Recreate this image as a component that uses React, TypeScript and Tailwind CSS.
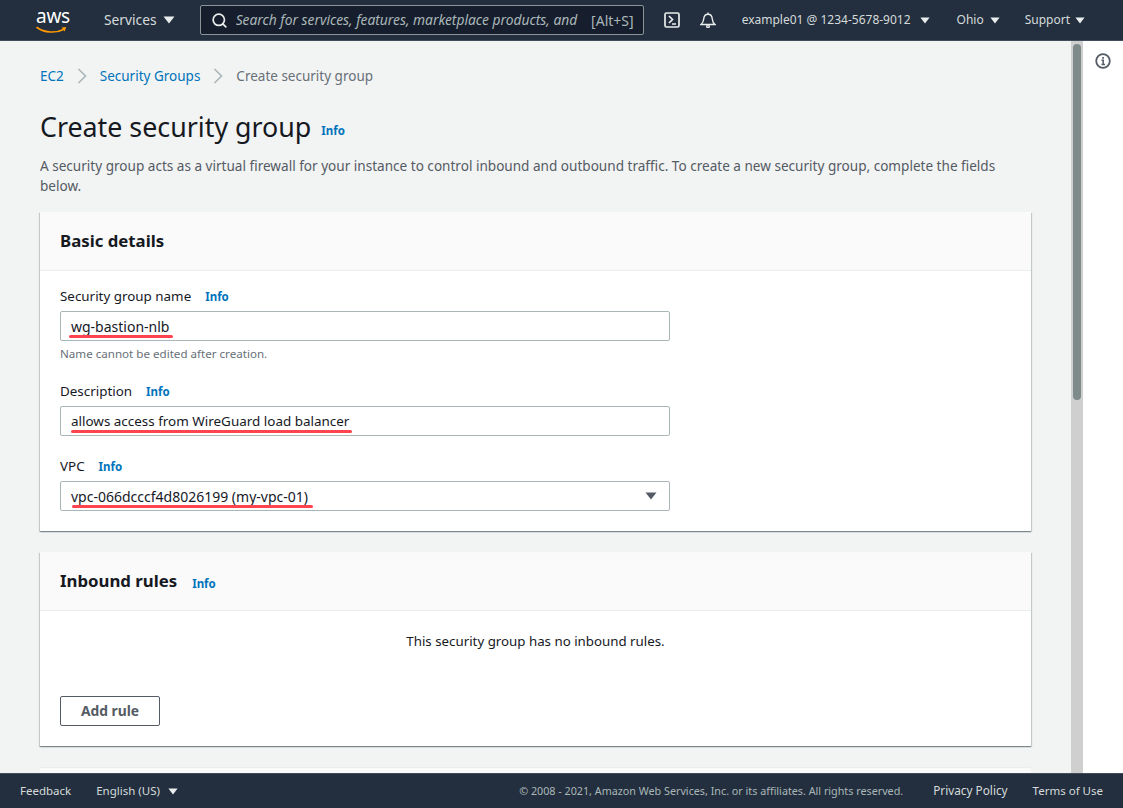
import { Search } from "lucide-react";

const font = "font-['Noto_Sans',sans-serif]";
const cardShadow = "shadow-[0_1px_1px_0_rgba(0,28,36,0.3),1px_1px_1px_0_rgba(0,28,36,0.15),-1px_1px_1px_0_rgba(0,28,36,0.15)]";

function Caret({ className = "" }: { className?: string }) {
  return (
    <svg viewBox="0 0 12 8" className={className} fill="currentColor">
      <path d="M0.5 0.5h11L6 7.5z" />
    </svg>
  );
}

function Chevron() {
  return (
    <svg viewBox="0 0 10 16" className="h-4 w-[10px] text-[#aab7b8]" fill="none" stroke="currentColor" strokeWidth="1.6">
      <path d="M1.5 1l7 7-7 7" />
    </svg>
  );
}

function AwsLogo() {
  return (
    <div className="relative flex h-[30px] w-[34px] flex-col items-center">
      <span className="text-[19px] leading-[20px] tracking-[-0.3px] text-white">aws</span>
      <svg viewBox="0 0 32 9" className="absolute top-[20px] left-0 h-[9px] w-[32px]" fill="none">
        <path d="M1 1.5C8 6.8 20 7.5 28 3.2" stroke="#ff9900" strokeWidth="1.6" strokeLinecap="round" />
        <path d="M25.6 1.6l4.6-.5-1.4 4.4z" fill="#ff9900" />
      </svg>
    </div>
  );
}

function Info({ className = "" }: { className?: string }) {
  return <a className={"text-[11.5px] font-bold text-[#0073bb] " + className}>Info</a>;
}

function Underline({ className }: { className: string }) {
  return <div className={"absolute h-[3px] rounded-full bg-[#ff4450] " + className} />;
}

function Header() {
  return (
    <header className="flex h-[41px] shrink-0 items-center border-b border-[#414d5c] bg-[#232f3e] text-[#d5dbdb]">
      <div className="ml-[36px] pt-[1px]">
        <AwsLogo />
      </div>
      <span className="ml-[34px] text-[13.8px]">Services</span>
      <Caret className="ml-[6px] h-[8px] w-[12px] text-[#eaeded]" />
      <div className="ml-[25px] flex h-[30px] w-[444px] items-center rounded-[2px] border border-[#879596] bg-[#161e2d] pr-[9px] pl-[10px]">
        <Search size={17} strokeWidth={2.4} className="shrink-0 text-[#eaeded]" />
        <span className="ml-[8px] min-w-0 flex-1 truncate text-[13.8px] text-[#aab7b8] italic">
          Search for services, features, marketplace products, and
        </span>
        <span className="ml-[9px] shrink-0 text-[14px] text-[#aab7b8]">[Alt+S]</span>
      </div>
      <svg viewBox="0 0 16 16" className="ml-[20px] h-[16px] w-[16px] text-[#eaeded]" fill="none" stroke="currentColor" strokeWidth="1.7">
        <rect x="1" y="1" width="14" height="14" rx="1.5" />
        <path d="M5 4l3.5 3.5L5 11M8 12h4" />
      </svg>
      <svg viewBox="0 0 16 16" className="ml-[20px] h-[16px] w-[16px] text-[#eaeded]" fill="none" stroke="currentColor" strokeWidth="1.4">
        <path d="M1 12.5h14c-2-1.5-2.5-3-2.7-5.5C12 4 10.5 2.2 8 2.2S4 4 3.7 7C3.5 9.5 3 11 1 12.5zM8 .5v1.7" />
        <circle cx="8" cy="14.2" r="1.3" />
      </svg>
      <span className="ml-[26px] text-[12px]">example01 @ 1234-5678-9012</span>
      <Caret className="ml-[9px] h-[7px] w-[10px] text-[#eaeded]" />
      <span className="ml-[27px] text-[12px]">Ohio</span>
      <Caret className="ml-[6px] h-[7px] w-[10px] text-[#eaeded]" />
      <span className="ml-[25px] text-[12px]">Support</span>
      <Caret className="ml-[5px] h-[7px] w-[10px] text-[#eaeded]" />
    </header>
  );
}

function CardHead({ title, info }: { title: string; info?: boolean }) {
  return (
    <div className="flex h-[59px] shrink-0 items-center border-b border-[#eaeded] bg-[#fafafa] px-5">
      <h2 className="text-[16.8px] leading-none font-bold text-[#16191f]">{title}</h2>
      {info && <Info className="mt-[5px] ml-[15px]" />}
    </div>
  );
}

function Field({ label, children }: { label: string; children: React.ReactNode }) {
  return (
    <div>
      <div className="flex h-[20px] items-center">
        <span className="text-[13.4px] text-[#16191f]">{label}</span>
        <Info className="mt-[2px] ml-[14px]" />
      </div>
      {children}
    </div>
  );
}

function Input({ value, className = "", children }: { value: string; className?: string; children?: React.ReactNode }) {
  return (
    <div className="relative mt-[5px] flex h-[30px] w-[610px] items-center rounded-[2px] border border-[#aab7b8] bg-white pr-[12px] pl-[10px] text-[#16191f]">
      <span className={"flex-1 " + className}>{value}</span>
      {children}
    </div>
  );
}

export default function App() {
  return (
    <div className={"flex h-[808px] w-[1123px] flex-col overflow-hidden bg-[#f2f3f3] " + font}>
      <Header />
      <div className="flex min-h-0 flex-1">
        <main className="min-w-0 flex-1 overflow-hidden px-10">
          <nav className="mt-[25px] flex h-[20px] items-center text-[13.5px]">
            <a className="text-[#0073bb]">EC2</a>
            <span className="mx-[13px]"><Chevron /></span>
            <a className="text-[#0073bb]">Security Groups</a>
            <span className="mx-[13px]"><Chevron /></span>
            <span className="text-[#687078]">Create security group</span>
          </nav>
          <div className="mt-[21px] flex h-[40px] items-center">
            <h1 className="text-[26.8px] leading-none text-[#16191f]">Create security group</h1>
            <Info className="mt-[7px] ml-[10px]" />
          </div>
          <p className="mt-[9px] text-[13.57px] leading-[20px] text-[#545b64]">
            A security group acts as a virtual firewall for your instance to control inbound and outbound traffic. To create a new security group, complete the fields
            <br />
            below.
          </p>

          <section className={"mt-[16px] flex h-[319px] flex-col bg-white " + cardShadow}>
            <CardHead title="Basic details" />
            <div className="px-5 pt-[15px]">
              <Field label="Security group name">
                <Input value="wg-bastion-nlb" className="text-[14px]">
                  <Underline className="top-[23px] left-[8px] w-[104px]" />
                </Input>
              </Field>
              <p className="mt-[5px] h-[16px] text-[11.6px] leading-[16px] text-[#687078]">Name cannot be edited after creation.</p>
              <div className="mt-[19px]">
                <Field label="Description">
                  <Input value="allows access from WireGuard load balancer" className="text-[13.45px]">
                    <Underline className="top-[23px] left-[10px] w-[281px]" />
                  </Input>
                </Field>
              </div>
              <div className="mt-[20px]">
                <Field label="VPC">
                  <Input value="vpc-066dcccf4d8026199 (my-vpc-01)" className="text-[14px]">
                    <Caret className="h-[8px] w-[12px] text-[#545b64]" />
                    <Underline className="top-[23px] left-[11px] w-[241px]" />
                  </Input>
                </Field>
              </div>
            </div>
          </section>

          <section className={"mt-[21px] flex h-[194px] flex-col bg-white " + cardShadow}>
            <CardHead title="Inbound rules" info />
            <p className="mt-[20px] text-center text-[13.3px] leading-[20px] text-[#16191f]">This security group has no inbound rules.</p>
            <button className="mt-[45px] ml-5 h-[30px] w-[100px] rounded-[2px] border border-[#545b64] bg-white text-[13.8px] font-bold text-[#545b64]">
              Add rule
            </button>
          </section>

          <section className="mt-[21px] h-[60px] border-t border-[#eaeded] bg-[#fafafa]" />
        </main>

        <div className="relative w-[12px] shrink-0 bg-[#cfcfcf]">
          <div className="absolute top-[3px] left-[2px] h-[356px] w-[8px] rounded-[4px] bg-[#7f8a8a]" />
        </div>
        <aside className="flex w-[40px] shrink-0 justify-center bg-white pt-[12px]">
          <svg viewBox="0 0 16 16" className="h-[16px] w-[16px] text-[#545b64]" fill="none" stroke="currentColor" strokeWidth="1.8">
            <circle cx="8" cy="8" r="6.8" />
            <path d="M6.5 7.3H8.2V11.500M6.500 11.500H10" strokeWidth="1.5" />
            <path d="M7.200 4h1.700v1.700H7.200z" fill="currentColor" stroke="none" />
          </svg>
        </aside>
      </div>
      <footer className="flex h-[35px] shrink-0 items-center border-t border-[#414d5c] bg-[#232f3e] text-[11.5px] text-[#d5dbdb]">
        <span className="ml-[20px]">Feedback</span>
        <span className="ml-[25px]">English (US)</span>
        <Caret className="ml-[8px] h-[7px] w-[10px] text-[#eaeded]" />
        <span className="ml-auto text-[10.75px] text-[#aab7b8]">© 2008 - 2021, Amazon Web Services, Inc. or its affiliates. All rights reserved.</span>
        <span className="ml-[30px] text-[11.8px]">Privacy Policy</span>
        <span className="mr-[20px] ml-[25px]">Terms of Use</span>
      </footer>
    </div>
  );
}
